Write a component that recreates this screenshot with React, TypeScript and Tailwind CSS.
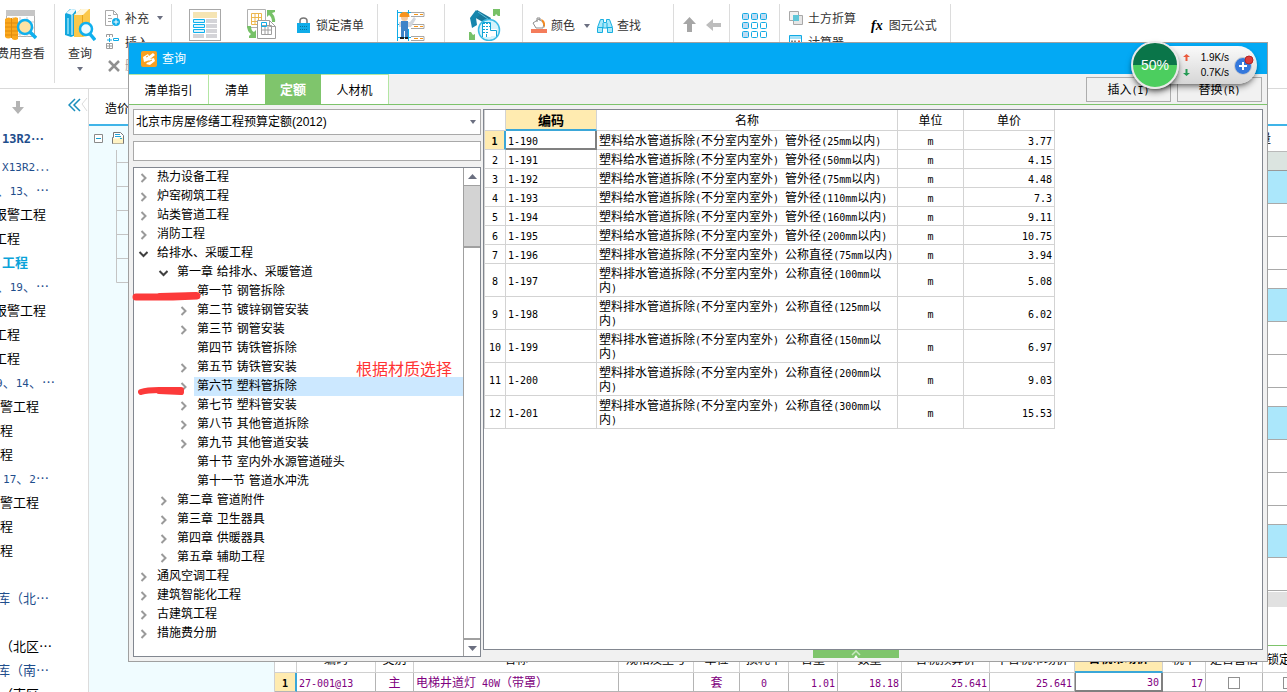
import React from "react";

type TreeItem = {
  level: 0 | 1 | 2,
  text: string,
  state?: "open" | "closed",
  selected?: boolean,
}

type Quota = {
  code: string,
  name: string,
  price: string,
}

const treeItems: TreeItem[] = [
  { level: 0, text: "热力设备工程", state: "closed" },
  { level: 0, text: "炉窑砌筑工程", state: "closed" },
  { level: 0, text: "站类管道工程", state: "closed" },
  { level: 0, text: "消防工程", state: "closed" },
  { level: 0, text: "给排水、采暖工程", state: "open" },
  { level: 1, text: "第一章 给排水、采暖管道", state: "open" },
  { level: 2, text: "第一节 钢管拆除" },
  { level: 2, text: "第二节 镀锌钢管安装", state: "closed" },
  { level: 2, text: "第三节 钢管安装", state: "closed" },
  { level: 2, text: "第四节 铸铁管拆除" },
  { level: 2, text: "第五节 铸铁管安装", state: "closed" },
  { level: 2, text: "第六节 塑料管拆除", state: "closed", selected: true },
  { level: 2, text: "第七节 塑料管安装", state: "closed" },
  { level: 2, text: "第八节 其他管道拆除", state: "closed" },
  { level: 2, text: "第九节 其他管道安装", state: "closed" },
  { level: 2, text: "第十节 室内外水源管道碰头" },
  { level: 2, text: "第十一节 管道水冲洗" },
  { level: 1, text: "第二章 管道附件", state: "closed" },
  { level: 1, text: "第三章 卫生器具", state: "closed" },
  { level: 1, text: "第四章 供暖器具", state: "closed" },
  { level: 1, text: "第五章 辅助工程", state: "closed" },
  { level: 0, text: "通风空调工程", state: "closed" },
  { level: 0, text: "建筑智能化工程", state: "closed" },
  { level: 0, text: "古建筑工程", state: "closed" },
  { level: 0, text: "措施费分册", state: "closed" },
];

const quotas: Quota[] = [
  { code: "1-190", name: "塑料给水管道拆除(不分室内室外) 管外径(25mm以内)", price: "3.77" },
  { code: "1-191", name: "塑料给水管道拆除(不分室内室外) 管外径(50mm以内)", price: "4.15" },
  { code: "1-192", name: "塑料给水管道拆除(不分室内室外) 管外径(75mm以内)", price: "4.48" },
  { code: "1-193", name: "塑料给水管道拆除(不分室内室外) 管外径(110mm以内)", price: "7.3" },
  { code: "1-194", name: "塑料给水管道拆除(不分室内室外) 管外径(160mm以内)", price: "9.11" },
  { code: "1-195", name: "塑料给水管道拆除(不分室内室外) 管外径(200mm以内)", price: "10.75" },
  { code: "1-196", name: "塑料排水管道拆除(不分室内室外) 公称直径(75mm以内)", price: "3.94" },
  { code: "1-197", name: "塑料排水管道拆除(不分室内室外) 公称直径(100mm以内)", price: "5.08" },
  { code: "1-198", name: "塑料排水管道拆除(不分室内室外) 公称直径(125mm以内)", price: "6.02" },
  { code: "1-199", name: "塑料排水管道拆除(不分室内室外) 公称直径(150mm以内)", price: "6.97" },
  { code: "1-200", name: "塑料排水管道拆除(不分室内室外) 公称直径(200mm以内)", price: "9.03" },
  { code: "1-201", name: "塑料排水管道拆除(不分室内室外) 公称直径(300mm以内)", price: "15.53" },
];

// names are cut on the left, the column is scrolled
const projects = [
  { text: "X13R2…", style: "w-[49px] text-[#1f4e8c]" },
  { text: "、13、…", style: "w-[49px] text-[#1f4e8c]" },
  { text: "报警工程", style: "w-[46px]" },
  { text: "工程", style: "w-[20px]" },
  { text: "工程", style: "w-[28px] font-bold text-[#0aa3d9]" },
  { text: "、19、…", style: "w-[49px] text-[#1f4e8c]" },
  { text: "报警工程", style: "w-[46px]" },
  { text: "工程", style: "w-[20px]" },
  { text: "工程", style: "w-[20px]" },
  { text: "9、14、…", style: "w-[55px] text-[#1f4e8c]" },
  { text: "警工程", style: "w-[39px]" },
  { text: "程", style: "w-[13px]" },
  { text: "程", style: "w-[13px]" },
  { text: "17、2…", style: "w-[49px] text-[#1f4e8c]" },
  { text: "警工程", style: "w-[39px]" },
  { text: "程", style: "w-[13px]" },
  { text: "程", style: "w-[13px]" },
  { text: "", style: "w-[13px]" },
  { text: "库（北…", style: "w-[49px] text-[#1f4e8c]" },
  { text: "", style: "w-[13px]" },
  { text: "（北区…", style: "w-[52px]" },
  { text: "库（南…", style: "w-[49px] text-[#1f4e8c]" },
  { text: "（南区", style: "w-[39px]" },
];

// latin runs take half the width of a chinese character
const Mixed = ({ text, size = "text-[10px]" }: { text: string, size?: string }) => (
  <>
    {text.split(/([\x20-\x7e]+)/).map((part, i) => (
      i % 2 === 0
        ? part
        : <span key={i} className={`${size} leading-none font-[family-name:'DejaVu_Sans_Mono',monospace]`}>{part}</span>
    ))}
  </>
);

const Caret = () => (
  <svg width="6" height="4" viewBox="0 0 6 4" className="shrink-0"><path d="M0 0h6L3 4z" fill="#6b6f80" /></svg>
);

const CostIcon = () => (
  <svg width="32" height="32" viewBox="0 0 32 32">
    <rect x="1.5" y="1.5" width="28" height="26" fill="#fff" stroke="#b0b0b0" />
    <path d="M1 1h29v6H1z" fill="#c6c6c6" />
    <path d="M8 8v20M15 8v20M22 8v20M2 13h27M2 19h27M2 25h27" stroke="#c9c9c9" />
    <path d="M0 10q4-3 7 0v18q-4 3-7 0zM7 10q3-3 6-1v21q-3 2-6 0z" fill="#fba81e" />
    <path d="M0 14h13M0 18h13M0 22h13M0 26h13M6.5 9v20" stroke="#e08b0c" />
    <circle cx="20" cy="18" r="7" fill="#ffe3a4" stroke="#0fb0ee" strokeWidth="2.5" />
    <path d="M25 23l6 6" stroke="#0fb0ee" strokeWidth="3.5" />
  </svg>
);

const QueryIcon = () => (
  <svg width="32" height="32" viewBox="0 0 32 32">
    <path d="M1 5l5-5 6 1v25l-5 2-6-2z" fill="#12a7de" />
    <path d="M2 4l5-4 5 1-4 5z" fill="#e8f9ff" />
    <path d="M4 9v16" stroke="#8fe2f9" strokeWidth="1.5" />
    <path d="M8 6v20" stroke="#fff" />
    <path d="M10 6l7-6h9v26l-7 2h-9z" fill="#fbc84a" />
    <path d="M10 6l7-6h8l-6 6z" fill="#fff6da" />
    <path d="M18.5 6v21" stroke="#e5a51b" />
    <circle cx="22" cy="20" r="6" fill="#ecfaff" stroke="#0fb0ee" strokeWidth="2.5" />
    <path d="M26 25l5 6" stroke="#0fb0ee" strokeWidth="3.5" />
  </svg>
);

const AddIcon = () => (
  <svg width="16" height="16" viewBox="0 0 16 16" fill="none">
    <path d="M8 15.5H.5V.5h8l4 4v4M8.5.5v4h4M3 5.5h3M3 8.5h4M3 11.5h3" stroke="#a9a9a9" />
    <circle cx="11" cy="12" r="4" fill="#10ace8" />
    <path d="M11 9.5v5M8.5 12h5" stroke="#fff" />
  </svg>
);

const InsertIcon = () => (
  <svg width="16" height="16" viewBox="0 0 16 16" fill="none">
    <path d="M1.5 3V.5h6V3M4.5.5V3M1.5 9.5h6v5h-6zM4.5 9v6M1 12h6" stroke="#9c9c9c" />
    <path d="M2 6h5M4.5 4v4M8.5 4.5h5v2h-5z" stroke="#10ace8" />
  </svg>
);

const DeleteIcon = () => (
  <svg width="14" height="14" viewBox="0 0 14 14"><path d="M2 2l10 10M12 2L2 12" stroke="#8f8f8f" strokeWidth="2.5" /></svg>
);

const FormIcon = () => (
  <svg width="32" height="32" viewBox="0 0 32 32">
    <rect x=".5" y=".5" width="31" height="31" fill="#fff" stroke="#a8a8a8" />
    <path d="M4 3h24v6H4z" fill="#f5e4b3" />
    <path d="M17 10h11v4H17zM17 15h11v4H17zM17 20h11v4H17zM17 25h11v4H17zM4 25h11v4H4z" fill="#d4d4d8" />
    <path d="M4.5 10.5h11v3h-11zM4.5 15.5h11v3h-11zM4.5 20.5h11v3h-11z" fill="#d9f3fd" stroke="#0fb0ee" />
  </svg>
);

const SwapIcon = () => (
  <svg width="30" height="30" viewBox="0 0 30 30" fill="none">
    <path d="M.5.5h18v18H.5z" fill="#fff" stroke="#b0b0b0" />
    <path d="M4.5 4.5h10v11h-10zM4.5 8.5h10M4.5 12.5h10M8 4.5v11M11.5 4.5v11" stroke="#ecb64c" />
    <path d="M10.5 11.5h12l6 6v12h-18z" fill="#fff" stroke="#9e9e9e" />
    <path d="M22.5 11.5v6h6" stroke="#9e9e9e" />
    <path d="M14.5 16.5h10v9h-10zM14.5 21h10M18 16.5v9M21 16.5v9" stroke="#9e9e9e" />
    <path d="M14.5 13.5h5v4h-5z" stroke="#10ace8" />
    <path d="M20 1h8v2l-3 1q4 4 3 9h-3q0-5-3-7l-2 2zM0 17h4q0 5 3 6l2-2v8H2v-2l2-2q-4-3-4-8z" fill="#77c168" />
  </svg>
);

const LockIcon = () => (
  <svg width="15" height="17" viewBox="0 0 15 17">
    <path d="M4 8V4q0-3 3.5-3T11 4v4" fill="none" stroke="#767676" strokeWidth="1.5" />
    <path d="M1 6h13v10H1z" fill="#10ace8" />
    <path d="M4 9.5h8M4 12.5h8" stroke="#08769f" strokeDasharray="1 1" />
  </svg>
);

const WorkerIcon = () => (
  <svg width="32" height="32" viewBox="0 0 32 32" fill="none">
    <path d="M1.5 1v31M2 3.5h13M2 15.5h13M2 28.5h13M12.5 1v5M12.5 20v12" stroke="#10ace8" />
    <path d="M15 3.5h13v4H15M15 15.5h13v4H15M15 27.5h13v4H15" stroke="#a7a7a7" />
    <path d="M18 5.5h4M24 5.5h3M18 17.5h4M24 17.5h3M18 29.5h4M24 29.5h3" stroke="#f59518" />
    <path d="M3 13h11l4-5 2 2-5 8H3z" fill="#d1d6de" />
    <path d="M5 12h7v17H9v-7H8v7H5z" fill="#3e83c8" />
    <circle cx="8.5" cy="8.5" r="3.5" fill="#f4c89d" />
    <path d="M3.5 8q0-5 5-5t5 5z" fill="#f7931d" />
    <path d="M4 28h4v2H4zM9 28h3v2H9z" fill="#222" />
  </svg>
);

const BrushIcon = () => (
  <svg width="32" height="32" viewBox="0 0 32 32">
    <path d="M8 1l14 8-3 7L5 8z" fill="#18799c" />
    <path d="M7 1L1 9l2 10 5-3-1-7 4-3z" fill="#1686ad" />
    <path d="M9 3l10 7" stroke="#5bc0dd" />
    <circle cx="20" cy="21" r="10.5" fill="#d5f3fc" stroke="#3cbce5" strokeWidth="1.5" />
    <path d="M13 13h9v15h-9z" fill="#fff" />
    <path d="M15 14v12M18 14v12M21 14v7" stroke="#10a4d6" strokeDasharray="1 2" strokeWidth="2" />
    <path d="M20 20h8v7h-8z" fill="#fff" />
    <path d="M13.5 28V13.5h8v8h6v6M17.5 28v-3" stroke="#10a4d6" fill="none" />
    <path d="M24 0h7v7h-2l-2-2-1 2h-2zM0 23h2l2 3 2-1v6H0z" fill="#77c168" />
  </svg>
);

const PaintIcon = () => (
  <svg width="17" height="17" viewBox="0 0 17 17">
    <path d="M2 6l6-4 5 4-1 5H5z" fill="#fff" stroke="#8d8d8d" />
    <path d="M6 5V1h3v3" fill="none" stroke="#8d8d8d" />
    <path d="M10 2q5 1 4 9l-2-4z" fill="#f58a1f" />
    <path d="M0 12h16v4H0z" fill="#f47c5b" />
  </svg>
);

const BinocularsIcon = () => (
  <svg width="16" height="16" viewBox="0 0 16 16">
    <path d="M3.5 1.5h3v3h3v-3h3l3 8v5h-5V10h-5v4.5h-5v-5z" fill="#a9e9fa" stroke="#17afe0" />
    <path d="M1 9.5h5M10 9.5h5M6 5v5M10 5v5" stroke="#17afe0" />
  </svg>
);

const GridIcon = () => (
  <svg width="26" height="26" viewBox="0 0 26 26" stroke="#12aae4">
    {[0, 1, 2].map((r) => [0, 1, 2].map((c) => (
      <rect key={`${r}${c}`} x={c * 9 + 0.5} y={r * 9 + 0.5} width="6" height="6" rx="1" fill={r === 0 || c === 0 ? "#bfdcf3" : "#fff"} />
    )))}
  </svg>
);

const EarthIcon = () => (
  <svg width="14" height="14" viewBox="0 0 14 14">
    <path d="M.5.5h9v9h-9z" fill="#f2f2f2" stroke="#a8a8a8" />
    <path d="M4.5 4.5h9v9h-9z" fill="#e6e6e6" stroke="#a8a8a8" />
    <path d="M4 4h6v6H4z" fill="#5fc6d8" />
  </svg>
);

const CalcIcon = () => (
  <svg width="13" height="14" viewBox="0 0 13 14">
    <path d="M.5.5h12v13H.5z" fill="#fff" stroke="#12aae4" />
    <path d="M1 1h11v3H1z" fill="#a6e0f6" />
    <path d="M2 6.5h2M5 6.5h2" stroke="#888" strokeWidth="2" />
    <path d="M9 6.5h2" stroke="#e55b3c" strokeWidth="2" />
  </svg>
);

const AppIcon = () => (
  <svg width="16" height="16" viewBox="0 0 16 16">
    <rect width="16" height="16" rx="2" fill="#f7a021" />
    <path d="M2 6l5-3 1 2 4-3 2 2-5 4 4-1 1 3-5 4-4-1 4-4-6 2z" fill="#fff" />
    <path d="M5 6l2-1M7 11l4-2" stroke="#f7a021" />
  </svg>
);

const Chevron = ({ state }: { state?: "open" | "closed" }) => (
  <svg width="10" height="10" viewBox="0 0 10 10" fill="none" className="shrink-0">
    {state === "closed" && <path d="M3.5 1l4 4-4 4" stroke="#9a9a9a" strokeWidth="2" />}
    {state === "open" && <path d="M1.5 3l4 4 4-4" stroke="#404040" strokeWidth="2" />}
  </svg>
);

const Toolbar = () => (
  <header className="flex h-[89px] shrink-0 border-b border-[#d9d9d9] pt-1 text-[#333]">
    <div className="h-[79px] w-[55px] border-r border-[#dcdcdc]">
      <button className="-ml-[3px] flex w-12 flex-col items-center gap-[5px] pt-[5px] whitespace-nowrap">
        <CostIcon />
        <span>费用查看</span>
      </button>
    </div>
    <div className="flex h-[79px] w-[117px] border-r border-[#dcdcdc] pl-2">
      <button className="flex w-[34px] flex-col items-center gap-[5px] pt-[5px]">
        <QueryIcon />
        <span>查询</span>
        <Caret />
      </button>
      <div className="flex flex-col gap-2 pt-[6px] pl-2">
        <button className="flex h-4 items-center gap-1">
          <AddIcon />
          <span className="pt-px pr-1">补充</span>
          <Caret />
        </button>
        <button className="flex h-4 items-center gap-1"><InsertIcon /><span className="pt-px">插入</span></button>
        <button className="flex h-4 items-center gap-1 pl-[2px] text-[#999]"><DeleteIcon />删除</button>
      </div>
    </div>
    <div className="flex h-[79px] w-[206px] items-start border-r border-[#dcdcdc] pt-[5px] pl-[17px]">
      <button aria-label="表单"><FormIcon /></button>
      <button aria-label="转换" className="ml-[26px]"><SwapIcon /></button>
      <button className="ml-[19px] flex items-center gap-[5px] pt-2"><LockIcon /><span className="pt-px">锁定清单</span></button>
    </div>
    <div className="h-[79px] w-[67px] border-r border-[#dcdcdc] pt-[5px] pl-[18px]">
      <button aria-label="人材机"><WorkerIcon /></button>
    </div>
    <div className="h-[79px] w-[78px] border-r border-[#dcdcdc] pt-[5px] pl-6">
      <button aria-label="替换"><BrushIcon /></button>
    </div>
    <div className="flex h-[79px] w-[151px] items-start border-r border-[#dcdcdc] pt-[13px] pl-2">
      <button className="flex items-center gap-[3px]">
        <PaintIcon />
        <span className="pt-px pr-[6px]">颜色</span>
        <Caret />
      </button>
      <button className="ml-[7px] flex items-center gap-1"><BinocularsIcon /><span className="pt-px">查找</span></button>
    </div>
    <div className="flex h-[79px] w-[56px] items-start gap-[9px] border-r border-[#dcdcdc] pt-[13px] pl-2">
      <button aria-label="上移"><svg width="15" height="16" viewBox="0 0 15 16"><path d="M7.5 0L14 7h-4v8H5V7H1z" fill="#a6a6a6" /></svg></button>
      <button aria-label="左移"><svg width="16" height="16" viewBox="0 0 16 16"><path d="M0 8l7-6v4h8v4H7v4z" fill="#bdbdbd" /></svg></button>
    </div>
    <div className="h-[79px] w-[50px] border-r border-[#dcdcdc] pt-[9px] pl-3">
      <button aria-label="宫格"><GridIcon /></button>
    </div>
    <div className="flex h-[79px] w-[171px] items-start border-r border-[#dcdcdc] pt-[6px] pl-[9px]">
      <div className="flex flex-col gap-2">
        <button className="flex h-4 items-center gap-[5px]"><EarthIcon /><span className="pt-px">土方折算</span></button>
        <button className="flex h-4 items-center gap-[6px]"><CalcIcon /><span className="pt-px">计算器</span></button>
      </div>
      <button className="mt-2 ml-[15px] flex items-center gap-[6px]">
        <i className="font-[family-name:'Liberation_Serif',serif] text-[14px] leading-none font-bold text-black">fx</i>图元公式
      </button>
    </div>
  </header>
);

const ProjectList = () => (
  <nav className="w-[89px] shrink-0 overflow-hidden border-r border-[#dcdcdc] font-[family-name:'Noto_Sans_CJK_SC',sans-serif]">
    <div className="flex h-[35px] items-start justify-between pt-[9px] pl-3">
      <svg width="12" height="13" viewBox="0 0 12 13" className="mt-[3px]"><path d="M4 0h4v6h4l-6 7-6-7h4z" fill="#b4b4b4" /></svg>
      <svg width="20" height="16" viewBox="0 0 20 16" fill="none">
        <path d="M7 1L1 7l6 6M12 1L6 7l6 6" stroke="#1a8fbe" strokeWidth="1.5" />
        <path d="M19 0l-5 6 5 7" stroke="#dcdcdc" />
      </svg>
    </div>
    <div className="flex h-[30px] w-11 items-center justify-end text-[13px] font-bold text-[#1f4e8c]"><Mixed text="13R2…" size="text-xs" /></div>
    {projects.map((item, i) => (
      <div key={i} className={`flex h-6 items-center justify-end text-[13px] whitespace-nowrap ${item.style}`}>
        <span><Mixed text={item.text} size="text-[11px]" /></span>
      </div>
    ))}
  </nav>
);

const th = "h-[26px] border-r border-b border-[#d0d0d0] p-0 text-center font-normal whitespace-nowrap";
const td = "h-[19px] border-r border-b border-[#b4b4b4] px-[2px] pt-px pb-0 whitespace-nowrap";

const MaterialTable = () => (
  <table className="w-[1059px] table-fixed border-separate border-spacing-0 border-l border-[#d0d0d0] bg-white">
    <colgroup>
      <col className="w-[22px]" /><col className="w-[79px]" /><col className="w-[38px]" /><col className="w-[205px]" />
      <col className="w-[75px]" /><col className="w-[46px]" /><col className="w-[49px]" /><col className="w-[49px]" />
      <col className="w-[64px]" /><col className="w-[88px]" /><col className="w-[85px]" /><col className="w-[88px]" />
      <col className="w-[43px]" /><col className="w-[57px]" /><col className="w-[71px]" />
    </colgroup>
    <thead>
      <tr>
        <th className={th}></th>
        <th className={th}>编码</th>
        <th className={th}>类别</th>
        <th className={th}>名称</th>
        <th className={th}>规格及型号</th>
        <th className={th}>单位</th>
        <th className={th}>损耗率</th>
        <th className={th}>含量</th>
        <th className={th}>数量</th>
        <th className={th}>含税预算价</th>
        <th className={th}>不含税市场价</th>
        <th className="h-[26px] border-r border-b-2 border-[#d0d0d0] border-b-[#3ba7d8] bg-[#ffebb0] p-0 text-center font-bold">含税市场价</th>
        <th className={th}>税率</th>
        <th className={th}>是否暂估</th>
        <th className="h-[26px] border-b border-[#d0d0d0] p-0 pl-1 text-left font-normal whitespace-nowrap">锁定数量</th>
      </tr>
    </thead>
    <tbody className="text-[#800080]">
      <tr>
        <td className="h-[19px] border-r-2 border-b border-[#b4b4b4] border-r-[#3ba7d8] bg-[#ffebb0] p-0 pt-px text-center font-bold text-black"><Mixed text="1" /></td>
        <td className={td}><Mixed text="27-001@13" /></td>
        <td className={`${td} text-center`}>主</td>
        <td className={td}><Mixed text="电梯井道灯 40W（带罩）" /></td>
        <td className={td}></td>
        <td className={`${td} text-center`}>套</td>
        <td className={`${td} text-center`}><Mixed text="0" /></td>
        <td className={`${td} text-right`}><Mixed text="1.01" /></td>
        <td className={`${td} text-right`}><Mixed text="18.18" /></td>
        <td className={`${td} text-right`}><Mixed text="25.641" /></td>
        <td className={`${td} text-right`}><Mixed text="25.641" /></td>
        <td className="h-[19px] border-r-2 border-b-2 border-l border-[#808080] px-[2px] pt-px pb-0 text-right"><Mixed text="30" /></td>
        <td className={`${td} text-right`}><Mixed text="17" /></td>
        <td className={`${td} text-center`}><input type="checkbox" aria-label="是否暂估" className="mx-auto block size-3 appearance-none border border-[#909090] bg-white" /></td>
        <td className={`${td} pl-5`}><input type="checkbox" aria-label="锁定数量" className="block size-3 appearance-none border border-[#909090] bg-white" /></td>
      </tr>
    </tbody>
  </table>
);

const Workspace = () => (
  <main className="flex min-w-0 flex-1 flex-col bg-[#f0fcff]">
    <div className="h-[37px] shrink-0 border-b-2 border-[#3fb4e8] bg-white pt-3 pl-4 leading-4">造价分析</div>
    <div className="flex min-h-0 flex-1 justify-between">
      <svg width="40" height="160" viewBox="0 0 40 160" fill="none">
        <path d="M5.5 8.5h8v8h-8z" fill="#fff" stroke="#8a8a8a" />
        <path d="M7 12.5h5" stroke="#129fd2" />
        <path d="M24.5 6.5h7l3 3v8h-11v-6h1z" fill="#fff" stroke="#777" />
        <path d="M24 12.5h5l1-1h4v6H24z" fill="#fff3c4" />
        <path d="M26 8.5h5M26 10.5h6M31 12.5h2" stroke="#23a4d8" />
        <path d="M27.5 24v132.5H40M27 36.5h13M27 60.5h13M27 84.5h13M27 108.5h13M27 132.5h13" stroke="#c4c4c4" />
      </svg>
      <div className="flex w-[19px] flex-col overflow-hidden bg-white">
        <div className="flex h-[26px] shrink-0 items-center justify-end border-b border-[#b9b9b9] pr-4">量</div>
        <div className="h-[19px] shrink-0 border-b border-[#999] bg-[#dbe4e0]"></div>
        {[0, 1, 2].map((i) => (
          <React.Fragment key={i}>
            <div className="h-[33px] shrink-0 border-b border-[#a9a9a9] bg-[#abe7fb]"></div>
            <div className="h-[33px] shrink-0 border-b border-[#a9a9a9]"></div>
            <div className="h-[33px] shrink-0 border-b border-[#a9a9a9]"></div>
            <div className="h-[19px] shrink-0 border-b border-[#a9a9a9]"></div>
          </React.Fragment>
        ))}
        <div className="h-[33px] shrink-0 border-b border-[#a9a9a9] bg-[#abe7fb]"></div>
        <div className="h-[33px] shrink-0 border-b border-[#a9a9a9]"></div>
        <div className="mt-px h-[15px] shrink-0 bg-[#e1e1e1]"></div>
      </div>
    </div>
    <div className="overflow-hidden pl-[185px]">
      <div className="border-t border-[#7dc36b] bg-white pt-px"><MaterialTable /></div>
    </div>
  </main>
);

const cell = "border-r border-b border-[#d3d3d3] px-[2px] pt-[3px] pb-px";
const head = "h-[21px] border-r border-b border-[#d3d3d3] p-0 pt-[2px] text-center font-normal";

const QuotaTable = () => (
  <table className="w-[570px] table-fixed border-separate border-spacing-0 border-l border-[#d3d3d3] leading-[14px]">
    <colgroup>
      <col className="w-[21px]" /><col className="w-[91px]" /><col className="w-[301px]" /><col className="w-[66px]" /><col className="w-[91px]" />
    </colgroup>
    <thead>
      <tr>
        <th className={head}></th>
        <th className="h-[21px] border-r border-b-2 border-[#d3d3d3] border-b-[#3ba7d8] bg-[#ffebb0] p-0 pt-[2px] text-center text-[13px] font-bold">编码</th>
        <th className={head}>名称</th>
        <th className={head}>单位</th>
        <th className={head}>单价</th>
      </tr>
    </thead>
    <tbody>
      {quotas.map((q, i) => (
        <tr key={q.code}>
          <td className={i === 0
            ? "border-r-2 border-b border-[#d3d3d3] border-r-[#3ba7d8] bg-[#ffebb0] p-0 pt-[2px] text-center font-bold"
            : "border-r border-b border-[#d3d3d3] p-0 pt-[2px] text-center"}
          >
            <Mixed text={String(i + 1)} />
          </td>
          <td className={i === 0 ? "border-r-2 border-b-2 border-[#808080] px-[2px] pt-[2px] pb-0" : cell}><Mixed text={q.code} /></td>
          <td className={cell}><Mixed text={q.name} /></td>
          <td className={`${cell} text-center`}><Mixed text="m" /></td>
          <td className={`${cell} text-right`}><Mixed text={q.price} /></td>
        </tr>
      ))}
    </tbody>
  </table>
);

const indent = ["pl-1", "pl-6", "pl-11"];

const QuotaTree = () => (
  <div className="relative mt-[6px] flex min-h-0 flex-1 border border-[#828790] bg-white">
    <ul className="min-w-0 flex-1 overflow-hidden font-[family-name:'DejaVu_Sans','Noto_Sans_CJK_SC',sans-serif]">
      {treeItems.map((item) => (
        <li key={item.text} className={`flex h-[19px] items-center gap-[6px] leading-[19px] whitespace-nowrap ${indent[item.level]}`}>
          <Chevron state={item.state} />
          <span className={`h-[19px] flex-1 pl-[3px] leading-[18px] ${item.selected ? "bg-[#cce8ff]" : ""}`}>{item.text}</span>
        </li>
      ))}
    </ul>
    <div className="flex w-[17px] flex-col border-l border-[#a0a0a0]">
      <button aria-label="向上" className="flex h-[18px] items-center justify-center border-b border-[#a0a0a0]">
        <svg width="9" height="5" viewBox="0 0 9 5"><path d="M0 5L4.5 0 9 5z" fill="#6b6f80" /></svg>
      </button>
      <div className="h-[62px] border-b-2 border-[#a0a0a0] bg-[#d3d3d3]"></div>
      <div className="flex-1"></div>
      <button aria-label="向下" className="flex h-[18px] items-center justify-center border-t-2 border-[#a0a0a0]">
        <svg width="9" height="5" viewBox="0 0 9 5"><path d="M0 0h9L4.5 5z" fill="#6b6f80" /></svg>
      </button>
    </div>

    {/* red marks on top of the tree */}
    <svg width="76" height="110" viewBox="0 0 76 110" fill="none" stroke="#fc3a3a" strokeLinecap="round" className="pointer-events-none absolute top-[122px] -left-1">
      <path d="M6 7h37l24-1" strokeWidth="7" />
      <path d="M30 6l36-1" strokeWidth="6" />
      <path d="M11 102q6-2 18-2h22" strokeWidth="6" />
      <path d="M29 101l22 1" strokeWidth="6" />
    </svg>
    <p className="pointer-events-none absolute top-[190px] left-[222px] text-base text-[#ff3333]">根据材质选择</p>
  </div>
);

const QueryDialog = () => (
  <section role="dialog" aria-label="查询" className="absolute top-[42px] right-[19px] bottom-[30px] left-[128px] flex flex-col border border-[#a0a0a0] bg-[#f1f1f1]">
    <div className="flex h-[31px] shrink-0 items-center gap-[5px] bg-[#03a9f4] pl-3 text-white">
      <AppIcon />
      <h1>查询</h1>
    </div>
    <div className="flex h-[31px] shrink-0 justify-between border-b border-[#7dc36b]">
      <div className="flex">
        <button className="w-20 border-t border-r border-[#b3e6a3] bg-white pt-[2px]">清单指引</button>
        <button className="w-14 border-t border-[#b3e6a3] bg-white pt-[2px]">清单</button>
        <button className="w-14 bg-[#7fc56c] pt-[2px] text-[13px] font-bold text-white">定额</button>
        <button className="w-[68px] border-t border-r border-[#b3e6a3] bg-white pt-[2px]">人材机</button>
      </div>
      <div className="flex gap-[6px] pt-[3px] pr-[5px]">
        <button className="h-[25px] w-[85px] border border-[#adadad]"><Mixed text="插入(I)" /></button>
        <button className="h-[25px] w-[85px] border border-[#adadad]"><Mixed text="替换(R)" /></button>
      </div>
    </div>
    <div className="flex min-h-0 flex-1 px-1 pt-1">
      <div className="flex w-[348px] shrink-0 flex-col pb-1">
        <div className="relative">
          <select aria-label="定额库" className="block h-[26px] w-full appearance-none border border-[#a9a9a9] bg-white pl-[2px]">
            <option>北京市房屋修缮工程预算定额(2012)</option>
          </select>
          <span className="pointer-events-none absolute top-[11px] right-[5px]"><Caret /></span>
        </div>
        <input aria-label="搜索" className="mt-[6px] h-5 border border-[#a9a9a9] bg-white px-[2px]" />
        <QuotaTree />
      </div>
      <div className="ml-[2px] flex min-w-0 flex-1 flex-col">
        <div className="flex-1 overflow-hidden border border-[#828790] bg-white"><QuotaTable /></div>
        <div className="flex h-[11px] justify-center pr-[34px]">
          <button aria-label="展开" className="flex h-2 w-[86px] items-center justify-center bg-[#7fc56c]">
            <svg width="10" height="8" viewBox="0 0 10 8" fill="none"><path d="M1 5l4-4 4 4" stroke="#c8e8bf" strokeWidth="1.5" /><path d="M3 8l2-3 2 3z" fill="#fff" /></svg>
          </button>
        </div>
      </div>
    </div>
  </section>
);

const SpeedBall = () => (
  <aside className="absolute top-[41px] right-[30px] flex items-center">
    <div className="z-10 flex size-12 items-center justify-center rounded-full border-2 border-[#e9e9e9] bg-linear-to-b from-[#0a7549] from-50% to-[#4cce5f] to-50% text-sm text-white shadow-md shadow-black/50">50%</div>
    <div className="-ml-6 flex h-[38px] w-[102px] items-center rounded-r-full bg-linear-to-b from-[#fafafa] to-[#d6d6d6] pl-7 text-[10px] leading-[15px] text-black shadow-md shadow-black/40">
      <div className="flex flex-col gap-2">
        <svg width="7" height="7" viewBox="0 0 7 7"><path d="M3.5 0L7 3H4.5v4h-2V3H0z" fill="#ea5a3d" /></svg>
        <svg width="7" height="7" viewBox="0 0 7 7"><path d="M3.5 7L7 4H4.5V0h-2v4H0z" fill="#259a54" /></svg>
      </div>
      <div className="w-[39px] text-right">
        <p>1.9K/s</p>
        <p>0.7K/s</p>
      </div>
      <svg width="21" height="20" viewBox="0 0 21 20" className="ml-1">
        <circle cx="10" cy="11" r="8.5" fill="#3478dc" stroke="#cfcfcf" />
        <path d="M10 7v8M6 11h8" stroke="#fff" strokeWidth="2" />
        <circle cx="16" cy="5" r="4" fill="#dd3b3b" stroke="#b32323" />
      </svg>
    </div>
  </aside>
);

const App: React.FC = (): React.ReactElement => {
  return (
    <div className="relative flex h-screen flex-col overflow-hidden bg-white font-[family-name:'Liberation_Sans','Noto_Sans_CJK_SC',sans-serif] text-xs text-black">
      <Toolbar />
      <div className="flex min-h-0 flex-1">
        <ProjectList />
        <Workspace />
      </div>
      <QueryDialog />
      <SpeedBall />
    </div>
  );
};

export default App;
